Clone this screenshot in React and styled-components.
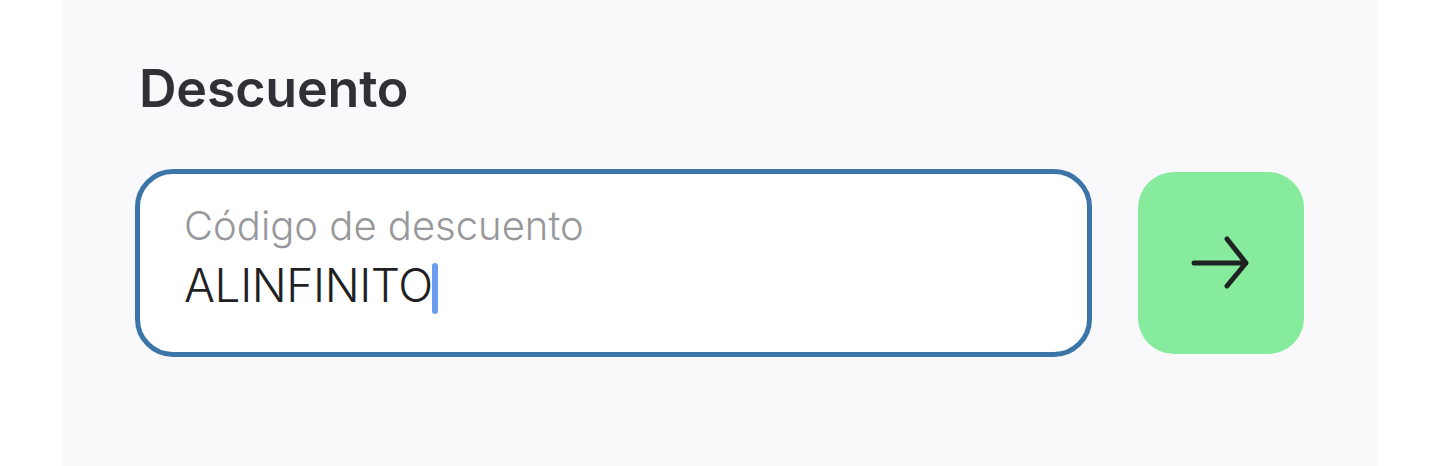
import React from 'react'
import styled, { createGlobalStyle } from 'styled-components'

const GlobalStyle = createGlobalStyle`
  html, body {
    margin: 0;
    padding: 0;
    background: #ffffff;
  }
  body {
    font-family: Inter, "Noto Sans", "Liberation Sans", sans-serif;
  }
`

const Page = styled.div`
  width: 1438px;
  height: 466px;
  display: flex;
  background: #ffffff;
`

const Panel = styled.section`
  margin-left: 63px;
  width: 1315px;
  height: 466px;
  box-sizing: border-box;
  padding: 63px 0 0 72px;
  background: #f9f9fc;
`

const Title = styled.h2`
  margin: 0;
  padding-left: 4px;
  font-size: 52px;
  line-height: 52px;
  font-weight: 620;
  letter-spacing: -0.2px;
  color: #303036;
`

const Row = styled.div`
  margin-top: 54px;
  display: flex;
  align-items: center;
  gap: 46px;
`

const Field = styled.div`
  width: 957px;
  height: 188px;
  box-sizing: border-box;
  border: 5px solid #3c76a9;
  border-radius: 38px;
  background: #ffffff;
  padding: 32px 0 0 44px;
  display: flex;
  flex-direction: column;
  gap: 16px;
`

const Label = styled.span`
  font-size: 40px;
  line-height: 40px;
  font-weight: 300;
  color: #98989c;
`

const Value = styled.span`
  font-size: 46px;
  line-height: 46px;
  font-weight: 300;
  letter-spacing: -0.4px;
  color: #1f1f24;
`

const Caret = styled.span`
  display: inline-block;
  width: 6px;
  height: 51px;
  margin-left: -1px;
  border-radius: 3px;
  background: #6a9cf2;
  vertical-align: -12px;
`

const GoButton = styled.button`
  width: 166px;
  height: 182px;
  border: none;
  border-radius: 36px;
  background: #86eb9c;
  display: flex;
  align-items: center;
  justify-content: center;
  padding: 0;
  cursor: pointer;
`

const Arrow = () => (
  <svg width="60" height="56" viewBox="1190 234 60 56" fill="none">
    <path
      d="M1193 262H1245M1226 238L1245 262L1226 285"
      stroke="#1f2222"
      strokeWidth="5"
      strokeLinecap="round"
      strokeLinejoin="round"
    />
  </svg>
)

const App = () => (
  <Page>
    <GlobalStyle />
    <Panel>
      <Title>Descuento</Title>
      <Row>
        <Field>
          <Label>Código de descuento</Label>
          <Value>
            ALINFINITO
            <Caret />
          </Value>
        </Field>
        <GoButton aria-label="Aplicar">
          <Arrow />
        </GoButton>
      </Row>
    </Panel>
  </Page>
)

export default App
